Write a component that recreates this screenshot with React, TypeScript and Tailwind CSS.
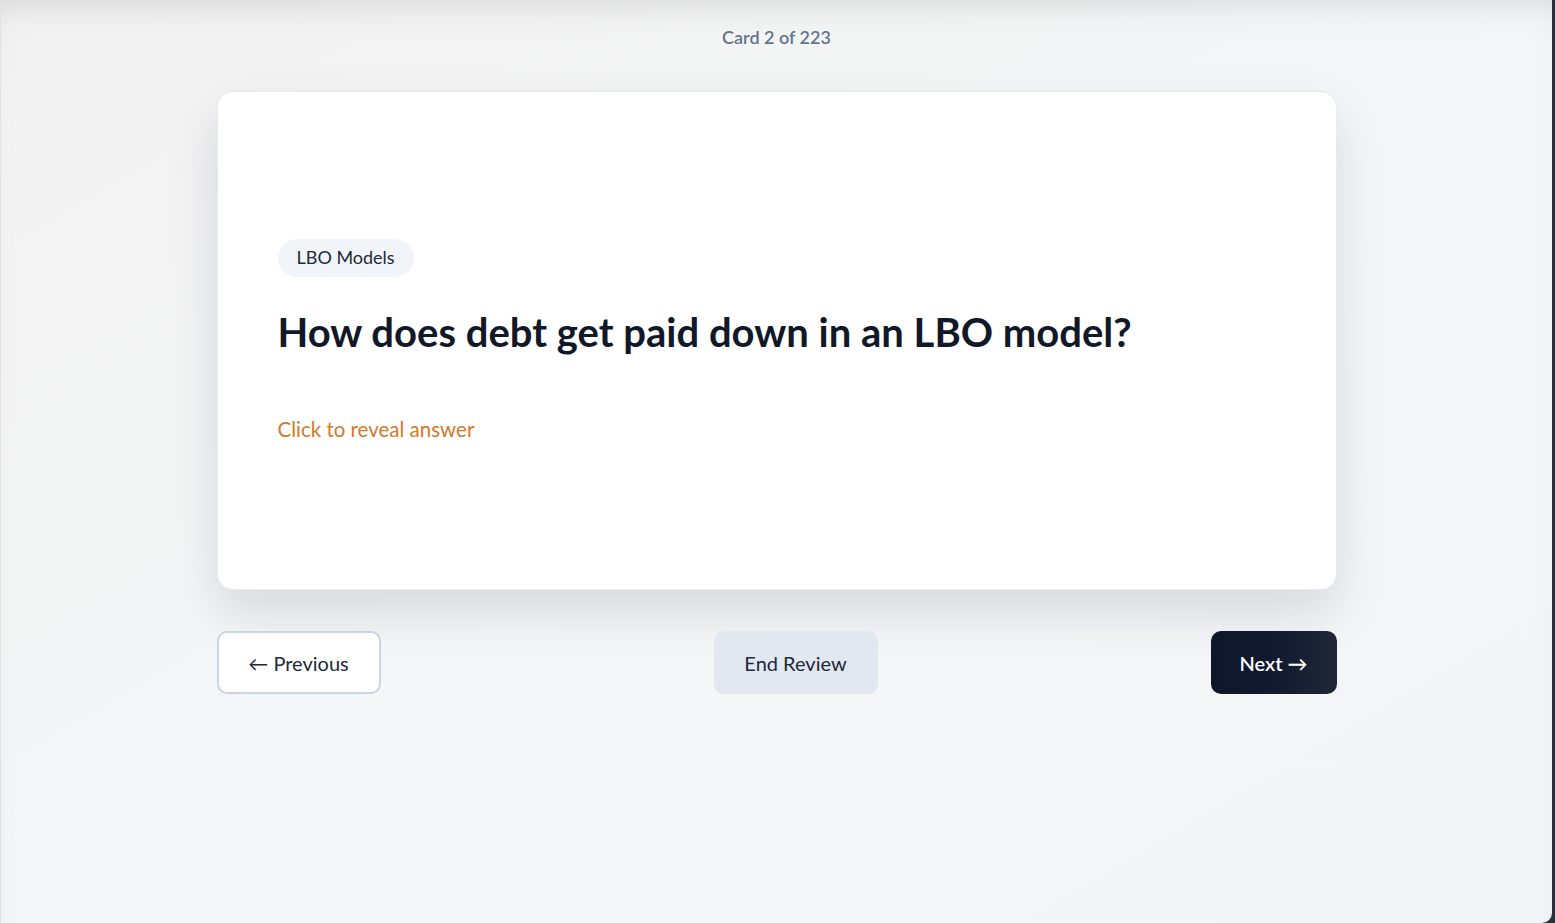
export default function App() {
  return (
    <div className="h-[923px] w-full bg-[#2d2f3b] overflow-hidden" style={{ fontFamily: "Lato, 'Noto Sans', sans-serif" }}>
      <div className="h-full mr-[3px] rounded-br-[10px] border-l border-[#e2e2e2] bg-gradient-to-br from-[#f2f2f2] via-[#f5f6f7] to-[#f3f5f8] shadow-[inset_0_24px_40px_-24px_rgba(0,0,0,0.14)] flex flex-col items-center">
        <div className="pt-[26px] text-[18px] leading-[22px] font-semibold text-[#64748b]">Card 2 of 223</div>

        <div className="mt-[43px] w-[1120px]">
          <div className="h-[499px] rounded-2xl bg-white border border-[#e8eaee] shadow-[0_22px_50px_rgba(15,23,42,0.13)] flex flex-col justify-center pl-[60px] cursor-pointer">
            <div>
              <span className="inline-flex items-center h-[38px] px-[19px] rounded-full bg-[#f1f5f9] text-[18px] text-[#1e293b]">LBO Models</span>
            </div>
            <h1 className="mt-[31px] text-[40px] leading-[48px] font-bold text-[#111827]">How does debt get paid down in an LBO model?</h1>
            <p className="mt-[59px] text-[20.5px] leading-[28px] text-[#d07a2a]">Click to reveal answer</p>
          </div>

          <div className="mt-[41px] flex items-center justify-between">
            <button className="h-[63px] w-[164px] rounded-[10px] border-2 border-[#cbd5e1] bg-white text-[20px] text-[#1e293b]">← Previous</button>
            <button className="h-[63px] w-[164px] rounded-[10px] bg-[#e2e8f0] text-[20px] text-[#1e293b]">End Review</button>
            <button className="h-[63px] w-[126px] rounded-[10px] bg-gradient-to-r from-[#0f172a] via-[#111a2e] to-[#1f2737] text-[20px] font-semibold text-white">Next →</button>
          </div>
        </div>
      </div>
    </div>
  );
}
